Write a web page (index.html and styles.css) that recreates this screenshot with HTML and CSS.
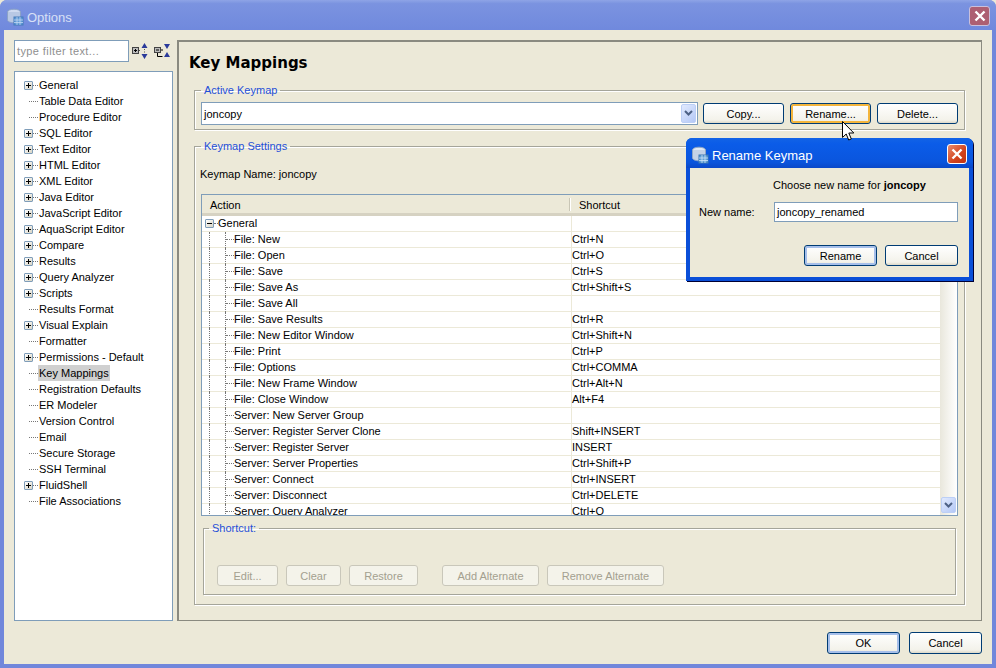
FILE: index.html
```html
<!DOCTYPE html>
<html lang="en">
<head>
<meta charset="utf-8">
<title>Options</title>
<link rel="stylesheet" href="styles.css">
</head>
<body>
<svg width="0" height="0" class="defs">
  <defs>
    <symbol id="db" viewBox="0 0 18 18">
      <ellipse cx="8" cy="4" rx="6.5" ry="2.8" fill="#dfe8f4" stroke="#8fa6c4"/>
      <path d="M1.5 4v8c0 1.6 3 2.8 6.5 2.8S14.5 13.600 14.500 12V4" fill="#c4d2e6" stroke="#8fa6c4"/>
      <rect x="8" y="9" width="9" height="8" fill="#5f9fd8" stroke="#3d78b4"/>
      <path d="M8 12h9M8 14.500h9M11 9v8M14 9v8" stroke="#cfe4f6" stroke-width=".8"/>
    </symbol>
  </defs>
</svg>
<div class="window">
  <header class="titlebar">
    <svg class="title-icon"><use href="#db"/></svg>
    <span class="title-text">Options</span>
    <span class="close close-dim"><svg viewBox="0 0 14 14"><path d="M2.500 2.500l9 9M11.500 2.500l-9 9" stroke="#fff" stroke-width="2.400"/></svg></span>
  </header>
  <div class="client">
    <div class="main">
      <aside class="sidebar">
        <div class="filter-row">
          <div class="filter">type filter text...</div>
          <svg class="tool" viewBox="0 0 16 16"><rect x="0.500" y="4.500" width="6" height="6" fill="#bbb" stroke="#444"/><path d="M2 7.500h3M3.500 6v3" stroke="#000"/><path d="M7 7.500h2" stroke="#555" stroke-dasharray="1 1"/><path d="M12.500 0l3 5h-6zM12.500 16l-3-5h6z" fill="#2a3a9a"/><path d="M12.500 6v1M12.500 8.500v1" stroke="#555"/></svg>
          <svg class="tool tool-2" viewBox="0 0 16 16"><rect x="0.500" y="4.500" width="6" height="5" fill="#bbb" stroke="#444"/><path d="M2 7h3" stroke="#000"/><path d="M3.500 10v3.500h5M7 7h2" stroke="#000" fill="none"/><path d="M10 1h6l-3 5zM13 9l3 5h-6z" fill="#2a3a9a"/></svg>
        </div>
        <div class="tree" id="tree"></div>
      </aside>
      <section class="page">
        <h1 class="page-title">Key Mappings</h1>
        <fieldset class="group active-group">
          <legend class="legend legend-flush">Active Keymap</legend>
          <div class="keymap-row">
            <div class="combo">
              <span class="combo-text">joncopy</span>
              <span class="combo-arrow"><svg viewBox="0 0 9 7"><path d="M1 1l3.500 3.500L8 1" fill="none" stroke="#4d6185" stroke-width="2"/></svg></span>
            </div>
            <button class="btn">Copy...</button>
            <button class="btn btn-hot">Rename...</button>
            <button class="btn">Delete...</button>
          </div>
        </fieldset>
        <fieldset class="group settings-group">
          <legend class="legend legend-flush">Keymap Settings</legend>
          <div class="keymap-name">Keymap Name: joncopy</div>
          <div class="table">
            <div class="table-main">
              <div class="thead">
                <div class="th th-action">Action</div>
                <div class="th">Shortcut</div>
              </div>
              <div class="tbody" id="rows"></div>
            </div>
            <div class="scrollbar">
              <span class="track"></span>
              <span class="scroll-down"><svg viewBox="0 0 9 7"><path d="M1 1l3.500 3.500L8 1" fill="none" stroke="#4d6185" stroke-width="2"/></svg></span>
            </div>
          </div>
          <fieldset class="group shortcut-group">
            <legend class="legend">Shortcut:</legend>
            <div class="shortcut-row">
              <button class="btn btn-off w-edit">Edit...</button>
              <button class="btn btn-off w-clear">Clear</button>
              <button class="btn btn-off w-restore">Restore</button>
              <button class="btn btn-off w-add">Add Alternate</button>
              <button class="btn btn-off w-remove">Remove Alternate</button>
            </div>
          </fieldset>
        </fieldset>
      </section>
    </div>
    <footer class="footer">
      <button class="btn btn-default w-foot">OK</button>
      <button class="btn w-foot">Cancel</button>
    </footer>
  </div>
</div>

<div class="dialog">
  <header class="dlg-title">
    <svg class="dlg-icon"><use href="#db"/></svg>
    <span class="dlg-title-text">Rename Keymap</span>
    <span class="close dlg-close"><svg viewBox="0 0 14 14"><path d="M2.500 2.500l9 9M11.500 2.500l-9 9" stroke="#fff" stroke-width="2.400"/></svg></span>
  </header>
  <div class="dlg-body">
    <p class="dlg-msg">Choose new name for <b>joncopy</b></p>
    <div class="dlg-field">
      <label class="dlg-label">New name:</label>
      <div class="dlg-input">joncopy_renamed</div>
    </div>
    <div class="dlg-buttons">
      <button class="btn btn-default w-dlg">Rename</button>
      <button class="btn w-dlg">Cancel</button>
    </div>
  </div>
</div>

<svg class="cursor" viewBox="0 0 13 20"><path d="M.5.500v16l3.700-3.500 2.500 6 2.600-1.100-2.500-5.900h5z" fill="#fff" stroke="#000"/></svg>
<script src="app.js"></script>
</body>
</html>
```
FILE: app.js
```js
const tree = [
  ["General",1],["Table Data Editor",0],["Procedure Editor",0],["SQL Editor",1],["Text Editor",1],
  ["HTML Editor",1],["XML Editor",1],["Java Editor",1],["JavaScript Editor",1],["AquaScript Editor",1],
  ["Compare",1],["Results",1],["Query Analyzer",1],["Scripts",1],["Results Format",0],["Visual Explain",1],
  ["Formatter",0],["Permissions - Default",1],["Key Mappings",0,1],["Registration Defaults",0],["ER Modeler",0],
  ["Version Control",0],["Email",0],["Secure Storage",0],["SSH Terminal",0],["FluidShell",1],["File Associations",0]
];
document.getElementById("tree").innerHTML = tree.map(([t,p,s]) =>
  `<div class="node${p ? "" : " leaf"}"><span class="twisty${p ? " has" : ""}">${p ? '<svg viewBox="0 0 7 7"><path d="M1 3.500h5M3.500 1v5" stroke="#000"/></svg>' : ""}</span><span class="leader"></span><span class="label${s ? " sel" : ""}">${t}</span></div>`
).join("");
const rows = [
  ["File: New","Ctrl+N"],["File: Open","Ctrl+O"],["File: Save","Ctrl+S"],["File: Save As","Ctrl+Shift+S"],["File: Save All",""],
  ["File: Save Results","Ctrl+R"],["File: New Editor Window","Ctrl+Shift+N"],["File: Print","Ctrl+P"],["File: Options","Ctrl+COMMA"],
  ["File: New Frame Window","Ctrl+Alt+N"],["File: Close Window","Alt+F4"],["Server: New Server Group",""],
  ["Server: Register Server Clone","Shift+INSERT"],["Server: Register Server","INSERT"],["Server: Server Properties","Ctrl+Shift+P"],
  ["Server: Connect","Ctrl+INSERT"],["Server: Disconnect","Ctrl+DELETE"],["Server: Query Analyzer","Ctrl+Q"]
];
document.getElementById("rows").innerHTML =
  `<div class="row"><div class="cell cell-action"><span class="twisty has"><svg viewBox="0 0 7 7"><path d="M1 3.500h5" stroke="#000"/></svg></span><span class="leader group-leader"></span><span>General</span></div><div class="cell"></div></div>` +
  rows.map(([a,b]) => `<div class="row"><div class="cell cell-action child"><span class="guide guide-outer"></span><span class="guide"></span><span class="leader child-leader"></span><span>${a}</span></div><div class="cell">${b}</div></div>`).join("");
```
FILE: styles.css
```css
* { box-sizing: border-box; }
html, body { margin: 0; padding: 0; }
body { width: 996px; height: 668px; overflow: hidden; position: relative; font: 11px "Liberation Sans", Tahoma, sans-serif; color: #000; background: #ece9d8; }
.defs { position: absolute; }
.window { width: 996px; height: 668px; display: flex; flex-direction: column; background: #7187db; border-radius: 7px 7px 0 0; padding: 0 4px 4px; }
.titlebar { height: 30px; display: flex; align-items: center; margin: 0 -4px; padding: 4px 6px 0 6px; background: linear-gradient(#8ea4e6 0, #7b93e0 12%, #7089dd 100%); border-radius: 7px 7px 0 0; flex: none; }
.title-icon { width: 18px; height: 18px; opacity: .85; }
.title-text { margin-left: 3px; font-size: 13px; color: #d8e0f6; flex: 1; }
.close { width: 20px; height: 20px; border: 1px solid #fff; border-radius: 3px; background: linear-gradient(135deg, #e88b6e, #d2421c 60%, #c23412); display: flex; align-items: center; justify-content: center; align-self: flex-start; margin-top: 2px; }
.close svg { width: 14px; height: 14px; }
.close-dim { width: 21px; background: #ad5f72; border-color: #c9c0dc; }
.client { flex: 1; background: #ece9d8; display: flex; flex-direction: column; min-height: 0; }
.main { flex: none; height: 581px; margin-top: 10px; display: flex; }
.sidebar { width: 159px; margin-left: 10px; flex: none; display: flex; flex-direction: column; }
.filter-row { height: 22px; display: flex; align-items: center; }
.filter { width: 115px; height: 22px; border: 1px solid #7f9db9; background: #fff; color: #8f8f8f; padding: 3px 2px; line-height: 14px; letter-spacing: .4px; }
.tool { width: 16px; height: 16px; margin-left: 3px; }
.tool-2 { margin-left: 6px; }
.tree { margin-top: 9px; height: 550px; border: 1px solid #7f9db9; background: #fff; padding: 5px 0 0 9px; }
.node { height: 16px; display: flex; align-items: center; white-space: nowrap; color: #000; }
.twisty { width: 9px; height: 9px; flex: none; }
.twisty.has { border: 1px solid #7f9db9; background: linear-gradient(135deg, #fff, #d8d4c4); border-radius: 1px; display: block; }
.twisty svg { display: block; width: 7px; height: 7px; }
.leader { width: 5px; border-top: 1px dotted #777; flex: none; }
.leaf .twisty { width: 5px; }
.leaf .leader { width: 9px; }
.label { padding: 0 1px; line-height: 16px; }
.sel { background: #d0d0d0; }
.page { width: 805px; margin-left: 4px; flex: none; border: 2px solid #8a8a80; border-right-width: 1px; border-bottom-width: 1px; padding: 10px 0 0 10px; }
.page-title { font-size: 15px; font-weight: bold; margin: 0; height: 23px; line-height: 22px; font-family: "DejaVu Sans", sans-serif; }
.group { border: 1px solid #a5a59a; margin: 0; padding: 0; min-width: 0; position: relative; box-shadow: inset 1px 1px 0 #fff, 1px 1px 0 #fff; }
.legend { color: #1f4fd8; padding: 0 3px; margin-left: 5px; line-height: 14px; }
.legend-flush { margin-left: 0; }
.active-group { margin-top: 8px; margin-left: 5px; width: 771px; height: 47px; padding: 5px 5px 0 6px; }
.keymap-row { display: flex; align-items: center; height: 23px; }
.combo { width: 497px; height: 23px; flex: none; border: 1px solid #7f9db9; background: #fff; display: flex; align-items: center; justify-content: space-between; padding: 1px 1px 1px 2px; margin-right: 5px; }
.combo-arrow, .scroll-down { width: 15px; height: 19px; background: linear-gradient(135deg, #e1eafe, #b4c8f6); border: 1px solid #bccff6; border-radius: 2px; display: flex; align-items: center; justify-content: center; flex: none; }
.combo-arrow svg, .scroll-down svg { width: 9px; height: 7px; }
.btn { font: inherit; color: #000; height: 21px; width: 81px; flex: none; padding: 0; margin: 0 6px 0 0; border: 1px solid #003c74; border-radius: 3px; background: linear-gradient(#fff, #f3f2ea 85%, #dcd8c8); box-shadow: none; }
.keymap-row .btn:last-child { margin-right: 0; }
.btn-hot { box-shadow: inset 0 0 0 2px #f4b53c; }
.btn-default { box-shadow: inset 0 0 0 2px #a6bfea; }
.btn-off { color: #a3a08f; border-color: #c9c7ba; background: #f4f3ea; }
.settings-group { margin-top: 9px; margin-left: 5px; width: 771px; height: 466px; padding: 0 5px 0 6px; }
.keymap-name { height: 20px; line-height: 14px; margin: 14px 0 0 -1px; }
.table { width: 757px; height: 322px; margin-top: 7px; border: 1px solid #7f9db9; background: #fff; display: flex; overflow: hidden; }
.table-main { flex: 1; min-width: 0; }
.thead { height: 21px; display: flex; background: #ece9d8; border-bottom: 3px solid #d6d2c2; }
.th { height: 18px; line-height: 20px; padding-left: 8px; flex: 1; position: relative; }
.th-action { flex: none; width: 369px; }
.th-action::after { content: ""; position: absolute; right: 0; top: 3px; width: 2px; height: 13px; background: linear-gradient(90deg, #c9c6b6 50%, #fff 50%); }
.tbody { height: 299px; overflow: hidden; }
.row { height: 16px; display: flex; border-bottom: 1px solid #ece9d8; white-space: nowrap; }
.cell { flex: 1; line-height: 15px; border-left: 1px solid #ece9d8; display: flex; align-items: center; }
.cell-action { flex: none; width: 369px; border-left: 0; padding-left: 3px; }
.group-leader { width: 4px; }
.child { padding-left: 7px; }
.guide { align-self: stretch; width: 1px; flex: none; border-left: 1px dotted #777; margin-bottom: -1px; }
.guide-outer { width: 16px; }
.child-leader { width: 8px; }
.scrollbar { width: 17px; flex: none; display: flex; flex-direction: column; background: linear-gradient(90deg, #e9e7dc, #fff); }
.track { flex: 1; }
.scroll-down { width: 15px; height: 16px; margin: 0 1px 2px 1px; }
.shortcut-group { margin-top: 5px; margin-left: 2px; width: 753px; height: 74px; }
.shortcut-row { display: flex; margin-top: 30px; margin-left: 13px; }
.shortcut-row .btn { height: 21px; margin-right: 8px; }
.w-edit { width: 61px; }
.w-clear { width: 55px; }
.shortcut-row .w-restore { width: 69px; margin-right: 24px; }
.w-add { width: 97px; }
.w-remove { width: 117px; }
.footer { flex: 1; display: flex; justify-content: flex-end; padding: 11px 10px 0 0; }
.footer .btn { margin: 0 0 0 9px; }
.footer .w-foot { width: 73px; height: 22px; }
.dialog { position: absolute; left: 686px; top: 138px; width: 287px; height: 143px; background: #0a4fd8; border-radius: 6px 6px 0 0; padding: 0 4px 4px; display: flex; flex-direction: column; box-shadow: 1px 1px 0 #003; }
.dlg-title { height: 30px; flex: none; display: flex; align-items: center; margin: 0 -4px; padding: 4px 6px 0 5px; background: linear-gradient(#1263e6, #0b5ce8 20%, #0a55dd 80%, #0a48c8); border-radius: 6px 6px 0 0; }
.dlg-icon { width: 18px; height: 18px; }
.dlg-title-text { margin-left: 3px; color: #fff; font-size: 13px; flex: 1; }
.dlg-body { flex: 1; background: #ece9d8; padding: 0 11px 0 9px; }
.dlg-msg { margin: 10px 0 0 74px; line-height: 15px; }
.dlg-field { display: flex; align-items: center; margin-top: 9px; }
.dlg-label { width: 75px; flex: none; }
.dlg-input { width: 185px; height: 20px; border: 1px solid #7f9db9; background: #fff; padding: 0 2px; line-height: 18px; }
.dlg-buttons { display: flex; justify-content: flex-end; margin-top: 23px; }
.dlg-buttons .btn { margin: 0 0 0 8px; }
.dlg-buttons .w-dlg { width: 73px; height: 21px; }
.cursor { position: absolute; left: 842px; top: 121px; width: 13px; height: 20px; }
```
